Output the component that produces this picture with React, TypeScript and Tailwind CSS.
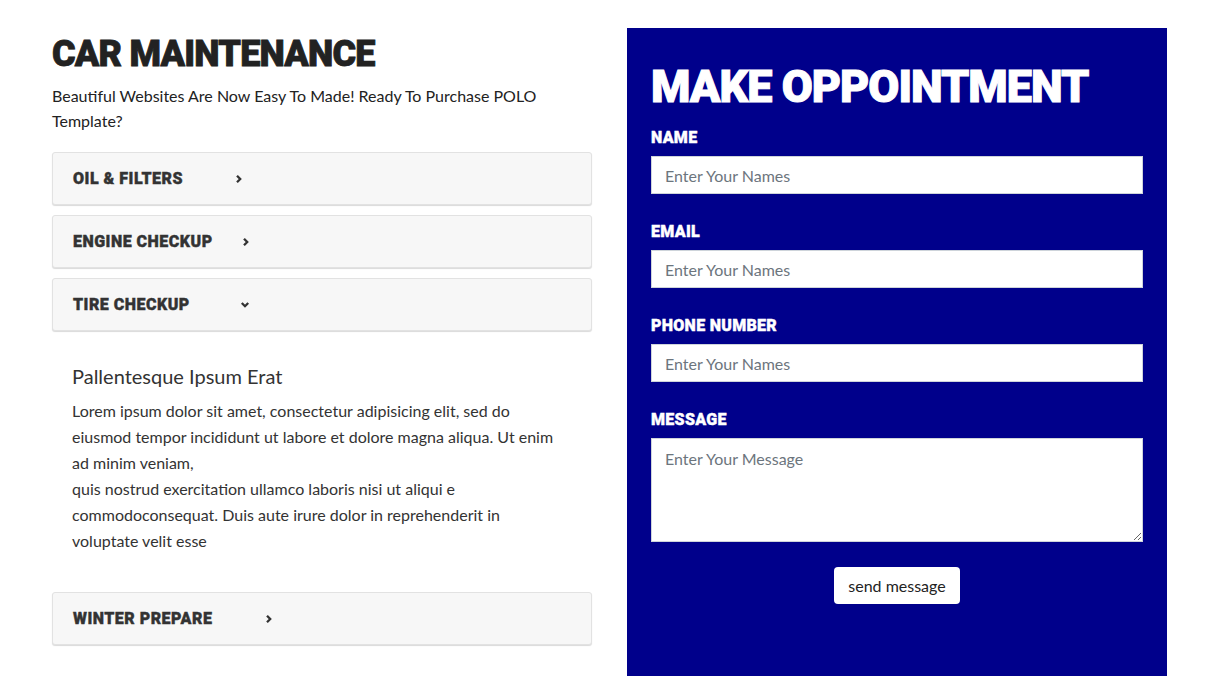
import { ReactNode } from 'react';

const body = { fontFamily: 'Lato, "Open Sans", sans-serif' };
const black = { fontFamily: 'Roboto, "Noto Sans", sans-serif' };

function Chevron({ down = false }: { down?: boolean }) {
  return (
    <svg width="10" height="10" viewBox="0 0 10 10" className="text-[#333]">
      {down ? (
        <polyline points="1.8,3 5,6.2 8.2,3" fill="none" stroke="currentColor" strokeWidth="2.3" />
      ) : (
        <polyline points="3,1.8 6.2,5 3,8.2" fill="none" stroke="currentColor" strokeWidth="2.3" />
      )}
    </svg>
  );
}

function AccordionHead({ title, gap, open = false }: { title: string; gap: string; open?: boolean }) {
  return (
    <div className="flex h-[53px] items-center rounded-[3px] border border-[#e2e2e2] bg-[#f7f7f7] px-5 shadow-[0_1px_1px_rgba(0,0,0,0.15)]">
      <span
        style={black}
        className="text-[16px] font-black tracking-[0.5px] text-[#333] [-webkit-text-stroke:0.4px_currentColor]"
      >
        {title}
      </span>
      <span className={gap}>
        <Chevron down={open} />
      </span>
    </div>
  );
}

function Field({ label, children }: { label: string; children: ReactNode }) {
  return (
    <div className="mb-[25px]">
      <label
        style={black}
        className="mb-[5px] block text-[16px] leading-[26px] font-black tracking-[0.3px] text-white [-webkit-text-stroke:0.4px_currentColor]"
      >
        {label}
      </label>
      {children}
    </div>
  );
}

export default function App() {
  const inputCls =
    'block h-[38px] w-full border border-[#ced4da] bg-white px-[13px] text-[16px] text-[#495057] placeholder:text-[#6c757d] outline-none';
  return (
    <div style={body} className="min-h-[682px] bg-white">
      <div className="ml-[52px] flex w-[1115px] gap-[35px] pt-[28px]">
        <div className="w-[540px]">
          <h2
            style={black}
            className="mt-[5px] text-[36px] leading-[43px] font-black tracking-[-0.8px] text-[#222] [-webkit-text-stroke:0.8px_currentColor]"
          >
            CAR MAINTENANCE
          </h2>
          <p className="mt-[7px] text-[16px] leading-[25px] text-[#222]">
            Beautiful Websites Are Now Easy To Made! Ready To Purchase POLO Template?
          </p>
          <div className="mt-[19px] flex flex-col gap-[10px]">
            <AccordionHead title="OIL & FILTERS" gap="ml-[51px]" />
            <AccordionHead title="ENGINE CHECKUP" gap="ml-[28px]" />
            <AccordionHead title="TIRE CHECKUP" gap="ml-[50px]" open />
          </div>
          <div className="pt-[31px] pr-[25px] pb-[38px] pl-5 text-[#333]">
            <h4 className="text-[20px] leading-[28px] text-[#333]">Pallentesque Ipsum Erat</h4>
            <p className="mt-[8px] text-[16px] leading-[26px]">
              Lorem ipsum dolor sit amet, consectetur adipisicing elit, sed do eiusmod tempor incididunt ut labore
              et dolore magna aliqua. Ut enim ad minim veniam,
              <br />
              quis nostrud exercitation ullamco laboris nisi ut aliqui e commodoconsequat. Duis aute irure dolor in
              reprehenderit in voluptate velit esse
            </p>
          </div>
          <AccordionHead title="WINTER PREPARE" gap="ml-[52px]" />
        </div>

        <div className="w-[540px] bg-[#00008b] px-[24px] pt-[32px] pb-[72px]">
          <h2
            style={black}
            className="mb-[11px] text-[45px] leading-[54px] font-black tracking-[-1px] text-white [-webkit-text-stroke:1px_currentColor]"
          >
            MAKE OPPOINTMENT
          </h2>
          <form>
            <Field label="NAME">
              <input className={inputCls} placeholder="Enter Your Names" />
            </Field>
            <Field label="EMAIL">
              <input className={inputCls} placeholder="Enter Your Names" />
            </Field>
            <Field label="PHONE NUMBER">
              <input className={inputCls} placeholder="Enter Your Names" />
            </Field>
            <Field label="MESSAGE">
              <textarea
                className="block h-[104px] w-full border border-[#ced4da] bg-white px-[13px] py-[8px] text-[16px] text-[#495057] outline-none placeholder:text-[#6c757d]"
                placeholder="Enter Your Message"
              />
            </Field>
            <div className="flex justify-center">
              <button
                type="button"
                className="h-[37px] w-[126px] rounded-[4px] bg-white text-[16px] text-[#222]"
              >
                send message
              </button>
            </div>
          </form>
        </div>
      </div>
    </div>
  );
}
